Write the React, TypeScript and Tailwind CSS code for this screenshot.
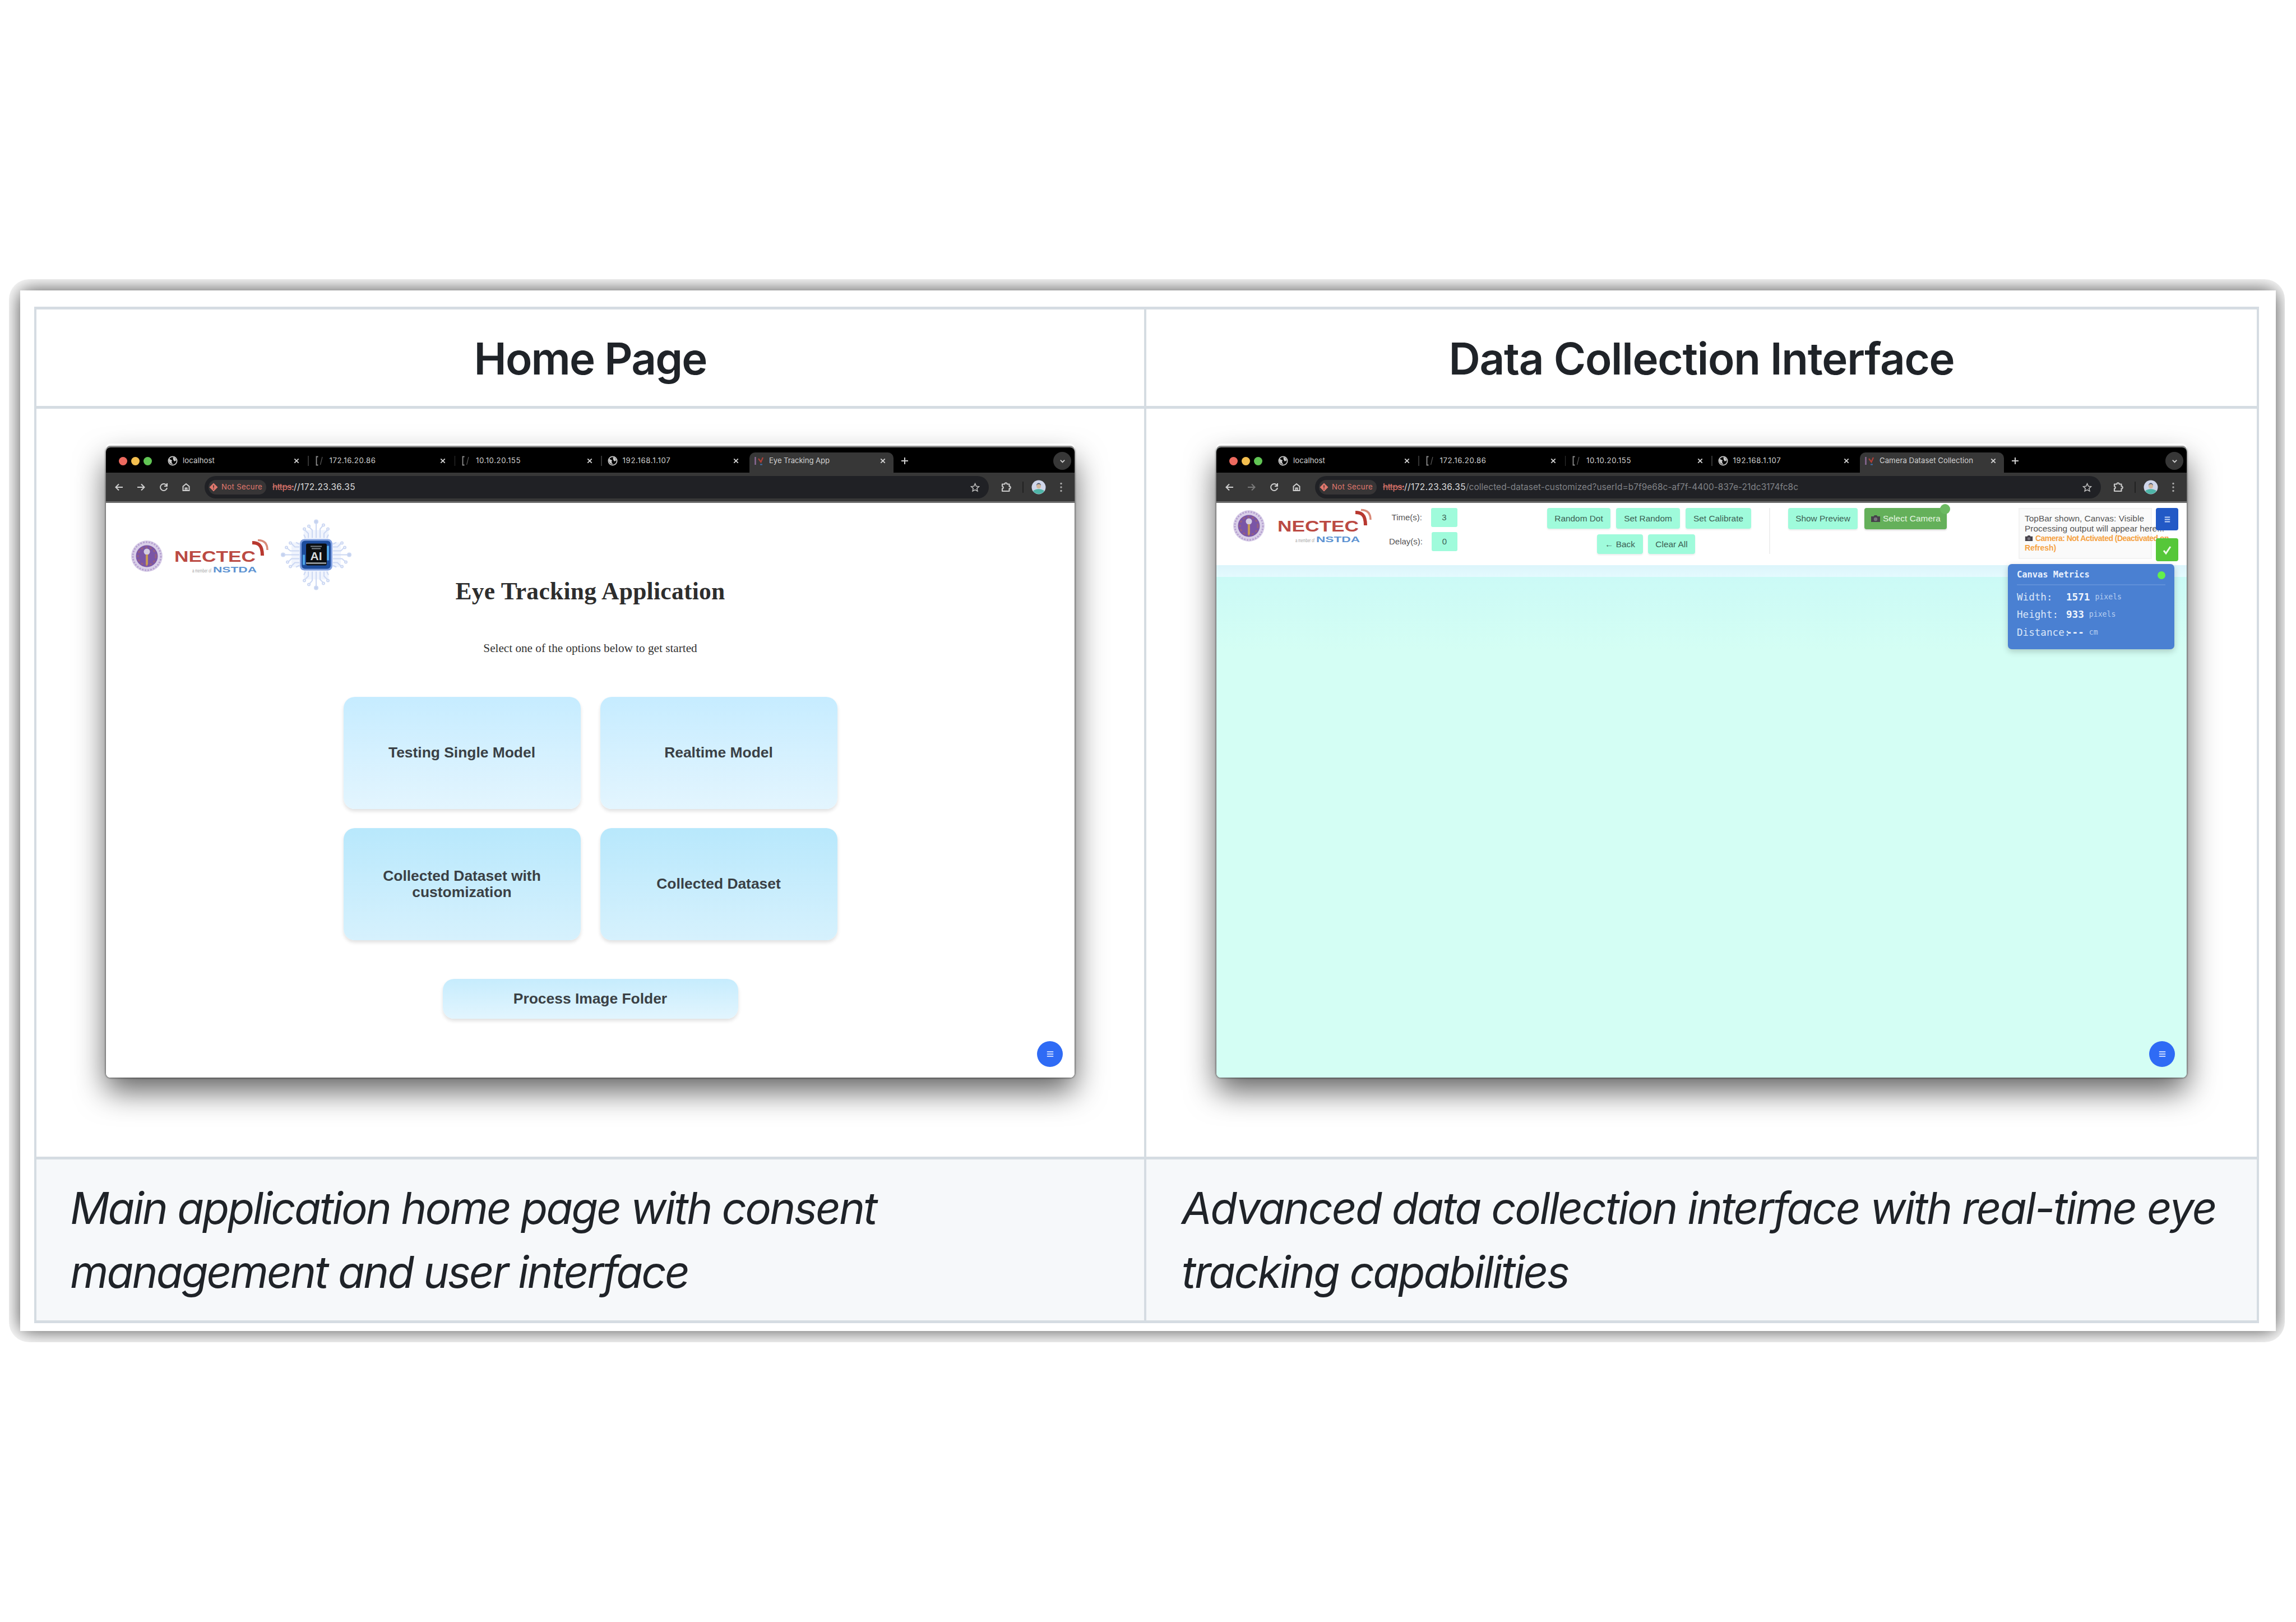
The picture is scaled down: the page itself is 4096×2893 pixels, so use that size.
import { useLayoutEffect, useRef, useState, type ReactNode } from "react";

const SANS = "font-[Inter,sans-serif]";
const ARIAL = "font-['Liberation_Sans',sans-serif]";

/** Single line of text whose tracking is adjusted so that it spans `w` pixels. */
function Fit({ w, children, className = "" }: { w: number; children: string; className?: string }) {
  const ref = useRef<HTMLSpanElement>(null);
  const [ls, setLs] = useState(0);
  useLayoutEffect(() => {
    const el = ref.current;
    if (!el) return;
    const natural = el.getBoundingClientRect().width;
    setLs((w - natural) / children.length);
  }, [w, children]);
  return (
    <span ref={ref} className={`inline-block shrink-0 whitespace-pre ${className}`} style={{ letterSpacing: ls }}>
      {children}
    </span>
  );
}

function Globe() {
  return (
    <svg viewBox="0 0 18 18" className="h-[18px] w-[18px]">
      <circle cx="9" cy="9" r="7.6" fill="none" stroke="#c9c9c9" strokeWidth="1.8" />
      <path d="M3 5.500 L8 8 L7 11 L9.500 15.500 L4 13 L2 9Z" fill="#c9c9c9" />
      <path d="M9.500 2.500 L13 3.500 L15.500 8 L12 10 L10 7Z" fill="#c9c9c9" />
    </svg>
  );
}

function Brace() {
  return (
    <svg viewBox="0 0 18 18" className="h-[18px] w-[18px]" fill="none" stroke="#8d8d8d" strokeWidth="1.8">
      <path d="M6.500 1.500 H3.500 V16.500 H6.500" />
      <path d="M14 2 L10.500 16" strokeWidth="1.200" stroke="#5b5b5b" />
    </svg>
  );
}

function NMark() {
  return (
    <svg viewBox="0 0 18 18" className="h-[18px] w-[18px]" fill="none">
      <path d="M2.500 2 V16" stroke="#8a6a94" strokeWidth="2.500" />
      <path d="M8 5 L12.500 11 L16 3" stroke="#b04038" strokeWidth="2.200" />
      <path d="M11 15.500 H15" stroke="#3f6fa8" strokeWidth="2" />
    </svg>
  );
}

function Close() {
  return (
    <svg viewBox="0 0 10 10" className="h-[10px] w-[10px] shrink-0" stroke="#d4d4d4" strokeWidth="1.900">
      <path d="M1.300 1.300 L8.700 8.700 M8.700 1.300 L1.300 8.700" />
    </svg>
  );
}

function Tab({ icon, title, w, active = false, sep = false }: { icon: ReactNode; title: string; w: number; active?: boolean; sep?: boolean }) {
  return (
    <div className="relative flex h-full w-[261.5px] shrink-0 items-center pr-[19px] pl-[8px]">
      {active && <span className="absolute top-[6px] right-[5px] bottom-0 left-0 rounded-t-[10px] bg-[#373737]" />}
      {sep && <span className="absolute top-[12px] right-[2px] h-[18px] w-[1.5px] bg-[#333]" />}
      <span className="relative flex flex-1 items-center gap-[9px] text-[13.2px] text-[#d2d2d2]">
        {icon}
        <Fit w={w}>{title}</Fit>
      </span>
      <span className="relative">
        <Close />
      </span>
    </div>
  );
}

function Chrome({ title, titleW, path, dimForward }: { title: string; titleW: number; path?: string; dimForward?: boolean }) {
  return (
    <div className={`${SANS} shrink-0`}>
      <div className="flex h-[45px] items-center bg-black pt-[3px]">
        <div className="flex w-[102px] shrink-0 gap-[7px] pl-[23px]">
          <span className="h-[15px] w-[15px] rounded-full bg-[#ed6a5f]" />
          <span className="h-[15px] w-[15px] rounded-full bg-[#f4bf4f]" />
          <span className="h-[15px] w-[15px] rounded-full bg-[#61c554]" />
        </div>
        <Tab icon={<Globe />} title="localhost" w={57} sep />
        <Tab icon={<Brace />} title="172.16.20.86" w={83} sep />
        <Tab icon={<Brace />} title="10.10.20.155" w={80} sep />
        <Tab icon={<Globe />} title="192.168.1.107" w={86} />
        <Tab icon={<NMark />} title={title} w={titleW} active />
        <svg viewBox="0 0 14 14" className="ml-[8px] h-[14px] w-[14px]" stroke="#d0d0d0" strokeWidth="2">
          <path d="M7 1 V13 M1 7 H13" />
        </svg>
        <span className="mr-[6px] ml-auto flex h-[32px] w-[32px] items-center justify-center rounded-full bg-[#373737]">
          <svg viewBox="0 0 12 12" className="h-[11px] w-[11px]" fill="none" stroke="#cfcfcf" strokeWidth="2">
            <path d="M2 4 L6 8 L10 4" />
          </svg>
        </span>
      </div>
      <div className="flex h-[51px] items-center bg-[#373737] pt-[1px]">
        <div className="flex w-[176px] shrink-0 gap-6 pl-[15px]">
          <svg viewBox="0 0 16 16" className="h-4 w-4" fill="none" stroke="#cfcfcf" strokeWidth="2">
            <path d="M15 8 H2.500 M8 2.500 L2.500 8 L8 13.500" />
          </svg>
          <svg viewBox="0 0 16 16" className="h-4 w-4" fill="none" stroke={dimForward ? "#7a7a7a" : "#cfcfcf"} strokeWidth="2">
            <path d="M1 8 H13.500 M8 2.500 L13.500 8 L8 13.500" />
          </svg>
          <svg viewBox="0 0 16 16" className="h-4 w-4" fill="none" stroke="#cfcfcf" strokeWidth="2">
            <path d="M13.300 5 A6 6 0 1 0 14 9" />
            <path d="M14 1 V6 H9" />
          </svg>
          <svg viewBox="0 0 16 16" className="h-4 w-4" fill="none" stroke="#cfcfcf" strokeWidth="2">
            <path d="M2.500 6.500 L8 2 L13.500 6.500 V14 H2.500Z" />
            <path d="M6.500 14 V9.500 H9.500 V14" />
          </svg>
        </div>
        <div className="flex h-[40px] flex-1 items-center rounded-full bg-[#202125] pr-[16px] pl-[7px] text-[15.4px]">
          <span className="flex h-[26px] w-[103px] shrink-0 items-center gap-[6px] rounded-full bg-[#373536] pl-[1px] text-[13.2px] text-[#e0776d]">
            <svg viewBox="0 0 16 16" className="h-[16px] w-[16px]">
              <path d="M8 0.500 L15.500 8 L8 15.500 L0.500 8Z" fill="#e0776d" />
              <path d="M8 4.500 V9 M8 10.500 V12" stroke="#373536" strokeWidth="1.600" />
            </svg>
            <Fit w={73}>Not Secure</Fit>
          </span>
          <Fit w={38} className="ml-[11px] text-[#e0776d] line-through">https:</Fit>
          <Fit w={110} className="text-[#dcdcdc]">{"//172.23.36.35"}</Fit>
          {path && <Fit w={593} className="text-[#818387]">{path}</Fit>}
          <svg viewBox="0 0 18 18" className="ml-auto h-[17px] w-[17px]" fill="none" stroke="#bdbdbd" strokeWidth="1.700">
            <path d="M9 1.800 L11.200 6.600 L16.400 7.200 L12.500 10.700 L13.600 15.900 L9 13.300 L4.400 15.900 L5.500 10.700 L1.600 7.200 L6.800 6.600Z" />
          </svg>
        </div>
        <svg viewBox="0 0 20 20" className="ml-[21px] h-[20px] w-[20px]" fill="none" stroke="#c9c9c9" strokeWidth="2.200">
          <path d="M3 4.500 H7.500 C7 1.500 12 1.500 11.500 4.500 H15.500 V8.500 C18.500 8 18.500 13 15.500 12.500 V17 H3 V12.500 C5.500 12 5.500 9 3 8.500Z" strokeLinejoin="round" />
        </svg>
        <span className="ml-[19px] h-[20px] w-[2px] bg-[#222]" />
        <svg viewBox="0 0 26 26" className="ml-[14px] h-[26px] w-[26px]">
          <circle cx="13" cy="13" r="12.500" fill="#cfd6ea" />
          <path d="M3 20 C7 15 19 15 23 20 A12.500 12.500 0 0 1 3 20Z" fill="#4fb5a8" />
          <circle cx="13" cy="11" r="4.200" fill="#d3b79d" />
          <path d="M9 10 C9 4 17 4 17 10 L15 7.500 H11Z" fill="#43506b" />
        </svg>
        <svg viewBox="0 0 14 18" className="mr-[17px] ml-[20px] h-[18px] w-[14px]" fill="#a9a9a9">
          <circle cx="7" cy="2.500" r="1.700" />
          <circle cx="7" cy="9" r="1.700" />
          <circle cx="7" cy="15.500" r="1.700" />
        </svg>
      </div>
      <div className="h-[3px] bg-[#6b6b6b]" />
    </div>
  );
}

function Emblem() {
  return (
    <svg viewBox="0 0 56 56" className="h-[56px] w-[56px] shrink-0">
      <circle cx="28" cy="28" r="28" fill="#d9cfe8" />
      <circle cx="28" cy="28" r="25" fill="none" stroke="#b7a3d2" strokeWidth="3" strokeDasharray="3 2" />
      <circle cx="28" cy="28" r="19.500" fill="#7a55a6" />
      <circle cx="28" cy="28" r="16" fill="none" stroke="#96607f" strokeWidth="3" strokeDasharray="4 4" />
      <circle cx="28" cy="20" r="5.500" fill="#d4cbe2" />
      <path d="M26 25 H30 V42 L28 46 L26 42Z" fill="#c79a55" />
    </svg>
  );
}

function Wordmark() {
  return (
    <svg viewBox="0 0 172 64" className="h-[64px] w-[172px] shrink-0 font-['Liberation_Sans',sans-serif]">
      <text x="1" y="42" fontSize="27" fontWeight="700" fill="#bb4a43" textLength="145" lengthAdjust="spacingAndGlyphs">NECTEC</text>
      <path d="M140 8 C150 8 158 11 158 31" fill="none" stroke="#b8382f" strokeWidth="6" />
      <path d="M150 3.500 C160 3.500 167 8 167 21" fill="none" stroke="#d98a78" strokeWidth="3.500" />
      <text x="33" y="61" fontSize="8.500" fill="#a3a3a3" textLength="34" lengthAdjust="spacingAndGlyphs">a member of</text>
      <text x="70" y="61" fontSize="15.500" fontWeight="700" fill="#5d93d2" textLength="78" lengthAdjust="spacingAndGlyphs">NSTDA</text>
    </svg>
  );
}

function Chip() {
  const arms = [0, 90, 180, 270];
  return (
    <svg viewBox="0 0 128 133" className="h-[133px] w-[128px] shrink-0">
      <g transform="translate(64 67.500)">
        {arms.map((a) => (
          <g key={a} transform={`rotate(${a})`} fill="none" stroke="#ccd8f3" strokeWidth="2">
            <rect x="-22" y="-44" width="44" height="16" fill="#f0f4fd" stroke="none" />
            <path d="M0 -30 V-57 M-7 -30 V-44 L-12 -49 M7 -30 V-46 L12 -52 M-14 -30 V-38 L-20 -44 M14 -30 V-38 L20 -44 M-19 -30 L-22 -36 M19 -30 L22 -36" />
            <circle cx="0" cy="-59" r="3" fill="#c4d1ee" />
            <circle cx="-13" cy="-51" r="2" />
            <circle cx="13" cy="-53" r="2" />
            <circle cx="-21" cy="-46" r="2" />
            <circle cx="21" cy="-46" r="2" />
          </g>
        ))}
        <rect x="-29" y="-28" width="58" height="56" rx="8" fill="#7f9fe0" />
        <rect x="-26" y="-25" width="52" height="50" rx="6" fill="#1d4c9c" />
        <path d="M21 -16 V10 M-22 0 V18" stroke="#4ea4e6" strokeWidth="4" />
        <rect x="-18" y="-20" width="37" height="39" rx="3" fill="#0b0e12" />
        <path d="M-10 -15 H10 M-8 -11 H8" stroke="#7c8288" strokeWidth="2" />
        <text
          x="0"
          y="9"
          textAnchor="middle"
          fontSize="21"
          fontWeight="700"
          fill="#d8dcde"
          className="font-['Liberation_Sans',sans-serif]"
        >
          AI
        </text>
        <path d="M-18 15 H18" stroke="#8d9296" strokeWidth="3" />
      </g>
    </svg>
  );
}

function Fab() {
  return (
    <span className="absolute right-[21px] bottom-[19px] flex h-[46px] w-[46px] items-center justify-center rounded-full bg-[#2f6bf5]">
      <svg viewBox="0 0 16 16" className="h-[14px] w-[13px]" stroke="#c9d8ff" strokeWidth="2.600">
        <path d="M1 3 H15 M1 8 H15 M1 13 H15" />
      </svg>
    </span>
  );
}

function Frame({ children, className }: { children: ReactNode; className: string }) {
  return (
    <div className={`flex h-[1124px] flex-col overflow-hidden rounded-[8px] ${className} shadow-[0_-3px_0_0_#8a8a8a,0_-7px_0_0_#fcfcfc,0_0_3px_1px_rgba(0,0,0,0.5),0_24px_54px_0_rgba(0,0,0,0.62)]`}>
      {children}
    </div>
  );
}

function Card({ children, className }: { children: ReactNode; className: string }) {
  return (
    <div className={`flex items-center justify-center rounded-[20px] bg-linear-to-b text-center text-[26.4px] leading-[29.5px] font-bold text-[#3a4045] shadow-[0_4px_6px_rgba(0,0,0,0.12)] ${className}`}>
      {children}
    </div>
  );
}

function HomeWindow() {
  return (
    <Frame className="w-[1728px] bg-white">
      <Chrome title="Eye Tracking App" titleW={108} />
      <div className={`relative flex flex-1 flex-col items-center bg-white pt-[25px] ${ARIAL}`}>
        <div className="flex items-center self-start pl-[45px]">
          <div className="mt-[7px] flex items-center gap-5">
            <Emblem />
            <Wordmark />
          </div>
          <div className="ml-[18px]">
            <Chip />
          </div>
        </div>
        <h1 className="-mt-[26px] font-['Liberation_Serif',serif] text-[43.5px] leading-[50px] font-bold whitespace-nowrap text-[#2d2d2d]">
          <Fit w={481}>Eye Tracking Application</Fit>
        </h1>
        <p className="mt-[65px] font-['Liberation_Serif',serif] text-[21.2px] leading-[24px] whitespace-nowrap text-[#333]">
          Select one of the options below to get started
        </p>
        <div className="mt-[75px] grid grid-cols-[423px_423px] grid-rows-[200px_200px] gap-x-[35px] gap-y-[34px]">
          <Card className="from-[#c6ecff] to-[#e3f5fe]">Testing Single Model</Card>
          <Card className="from-[#c6ecff] to-[#e3f5fe]">Realtime Model</Card>
          <Card className="from-[#b8e8fc] to-[#d6f1fd]">
            Collected Dataset with
            <br />
            customization
          </Card>
          <Card className="from-[#b8e8fc] to-[#d6f1fd]">Collected Dataset</Card>
        </div>
        <Card className="mt-[69px] h-[71px] w-[527px] from-[#c6ecfd] to-[#e2f5fe]">Process Image Folder</Card>
        <Fab />
      </div>
    </Frame>
  );
}

function Mint({ children, className }: { children: ReactNode; className: string }) {
  return (
    <span className={`flex items-center justify-center rounded-[4px] bg-[#9ffbdb] text-[15.4px] whitespace-nowrap text-[#3d5f54] shadow-[0_2px_3px_rgba(0,0,0,0.08)] ${className}`}>
      {children}
    </span>
  );
}

function Camera({ className }: { className: string }) {
  return (
    <svg viewBox="0 0 18 14" className={className}>
      <path d="M1 3 H5.500 L7 1 H11 L12.500 3 H17 V13 H1Z" fill="#46424a" />
      <circle cx="9" cy="8" r="3.200" fill="#77727d" />
    </svg>
  );
}

function MetricRow({ label, value, unit }: { label: string; value: string; unit: string }) {
  return (
    <div className="flex h-[31.5px] items-center text-[17.6px] text-[#dbe7f8]">
      <span className="w-[88px] whitespace-nowrap">{label}</span>
      <span className="font-bold text-[#f1f6fd]">{value}</span>
      <span className="ml-[9px] text-[13.2px] text-[#b5cdf0]">{unit}</span>
    </div>
  );
}

function CollectionWindow() {
  return (
    <Frame className="w-[1731px] bg-[#d4fef4]">
      <Chrome
        title="Camera Dataset Collection"
        titleW={167}
        dimForward
        path="/collected-dataset-customized?userId=b7f9e68c-af7f-4400-837e-21dc3174fc8c"
      />
      <div className={`relative flex flex-1 flex-col ${ARIAL}`}>
        <div className="flex h-[111px] items-start bg-white pt-[9px] pl-[30px]">
          <div className="flex items-center gap-[22px]">
            <Emblem />
            <Wordmark />
          </div>
          <div className="ml-[28px] flex w-[122px] flex-col gap-[9px] text-[15px] text-[#555]">
            <div className="flex h-[34px] items-center justify-end gap-[16px]">
              Time(s):
              <span className="flex h-full w-[47px] items-center justify-center rounded-[3px] bg-[#9ffbdb] text-[#3d5f54]">3</span>
            </div>
            <div className="flex h-[34px] items-center justify-end gap-[16px]">
              Delay(s):
              <span className="flex h-full w-[47px] items-center justify-center rounded-[3px] bg-[#9ffbdb] text-[#3d5f54]">0</span>
            </div>
          </div>
          <div className="ml-[160px] flex flex-col items-center gap-[10px]">
            <div className="flex h-[37px] gap-[10px]">
              <Mint className="w-[113px]">Random Dot</Mint>
              <Mint className="w-[114px]">Set Random</Mint>
              <Mint className="w-[117px]">Set Calibrate</Mint>
            </div>
            <div className="flex h-[35px] gap-[9px] pr-[11px]">
              <Mint className="w-[82px]">← Back</Mint>
              <Mint className="w-[84px]">Clear All</Mint>
            </div>
          </div>
          <div className="ml-[32px] h-[82px] w-[2px] bg-[#f0f0f0]" />
          <Mint className="ml-[32px] h-[38px] w-[124px]">Show Preview</Mint>
          <div className="relative ml-[12px] flex h-[38px] w-[147px] items-center justify-center gap-[4px] rounded-[4px] bg-[#64b05a] text-[15.4px] whitespace-nowrap text-[#e6f6e2] shadow-[0_2px_3px_rgba(0,0,0,0.15)]">
            <Camera className="h-[14px] w-[18px]" />
            <Fit w={103}>Select Camera</Fit>
            <span className="absolute -top-[7px] -right-[6px] h-[18px] w-[18px] rounded-full bg-[#6cba62]" />
          </div>
          <div className="ml-[128px] h-[91px] w-[238px] border-2 border-[#f3f3f3] bg-[#fafafa] pt-[8px] pl-[9px] text-[15.4px] leading-[17.8px] whitespace-nowrap text-[#555]">
            <div><Fit w={213}>TopBar shown, Canvas: Visible</Fit></div>
            <div><Fit w={249}>Processing output will appear here...</Fit></div>
            <div className="flex items-center gap-[4px] text-[14px] text-[#f5a243]">
              <Camera className="h-[12px] w-[15px] shrink-0" />
              <Fit w={238} className="font-bold">Camera: Not Activated (Deactivated on</Fit>
            </div>
            <div className="text-[14px] text-[#f5a243]"><Fit w={56} className="font-bold">Refresh)</Fit></div>
          </div>
        </div>
        <div className="h-[21px] bg-linear-to-b from-[#dcf5fb] to-[#e4fafe]" />
        <div className="h-[130px] bg-linear-to-b from-[#cbfaf6] to-[#d4fef4]" />
        <div className="flex-1 bg-[#d4fef4]" />

        <div className="absolute top-[9px] right-[15px] flex flex-col gap-[14px]">
          <span className="flex h-[40px] w-[40px] items-center justify-center rounded-[4px] bg-[#2259c6]">
            <svg viewBox="0 0 14 16" className="h-[15px] w-[11px]" stroke="#c3d5f5" strokeWidth="2.600">
              <path d="M1 3 H13 M1 8 H13 M1 13 H13" />
            </svg>
          </span>
          <span className="flex h-[41px] w-[40px] items-center justify-center rounded-[4px] bg-[#56c739]">
            <svg viewBox="0 0 16 18" className="h-[18px] w-[16px]" fill="none" stroke="#effbe9" strokeWidth="3">
              <path d="M2 10 L6 15 L14 3" />
            </svg>
          </span>
        </div>

        <div className="absolute top-[109px] right-[22px] h-[152px] w-[297px] rounded-[7px] bg-[#4a80d2] px-[16px] font-['DejaVu_Sans_Mono',monospace] shadow-[0_4px_12px_rgba(0,0,0,0.2)]">
          <div className="flex h-[38px] items-center justify-between border-b-2 border-[#6090d9] pt-[4px]">
            <span className="text-[15.4px] font-bold text-[#eaf2fd]">Canvas Metrics</span>
            <span className="h-[14px] w-[14px] rounded-full bg-[#63f04a]" />
          </div>
          <div className="pt-[5px]">
            <MetricRow label="Width:" value="1571" unit="pixels" />
            <MetricRow label="Height:" value="933" unit="pixels" />
            <MetricRow label="Distance:" value="---" unit="cm" />
          </div>
        </div>
        <Fab />
      </div>
    </Frame>
  );
}

export default function App() {
  return (
    <div className={`h-[2893px] w-[4096px] overflow-hidden bg-white pt-[498px] pl-[16px] ${SANS}`}>
      <div className="h-[1896px] w-[4060px] overflow-hidden rounded-[36px] py-[20px] pl-[20px]">
        <div className="h-[1856px] w-[4024px] bg-white pt-[29px] pl-[25px] shadow-[0_0_34px_0_rgba(0,0,0,0.72)]">
          <div className="grid w-[3969px] grid-cols-[1980px_1985px] grid-rows-[177px_1339px_292px] border-t-[5px] border-l-4 border-[#d5dce2] text-[#1f2328]">
            <div className="flex items-center justify-center border-r-4 border-b-[5px] border-[#d5dce2] pt-[3px] text-[78px] font-semibold">
              <Fit w={415}>Home Page</Fit>
            </div>
            <div className="flex items-center justify-center border-r-4 border-b-[5px] border-[#d5dce2] pt-[3px] text-[78px] font-semibold">
              <Fit w={902}>Data Collection Interface</Fit>
            </div>
            <div className="border-r-4 border-b-[5px] border-[#d5dce2] pt-[69px] pl-[124px]">
              <HomeWindow />
            </div>
            <div className="border-r-4 border-b-[5px] border-[#d5dce2] pt-[69px] pl-[125px]">
              <CollectionWindow />
            </div>
            <div className="border-r-4 border-b-[5px] border-[#d5dce2] bg-[#f6f8fa] pt-[30px] pl-[60px] text-[78px] leading-[114.4px] italic">
              <div><Fit w={1438}>Main application home page with consent</Fit></div>
              <div><Fit w={1103}>management and user interface</Fit></div>
            </div>
            <div className="border-r-4 border-b-[5px] border-[#d5dce2] bg-[#f6f8fa] pt-[30px] pl-[63px] text-[78px] leading-[114.4px] italic">
              <div><Fit w={1845}>Advanced data collection interface with real-time eye</Fit></div>
              <div><Fit w={690}>tracking capabilities</Fit></div>
            </div>
          </div>
        </div>
      </div>
    </div>
  );
}
